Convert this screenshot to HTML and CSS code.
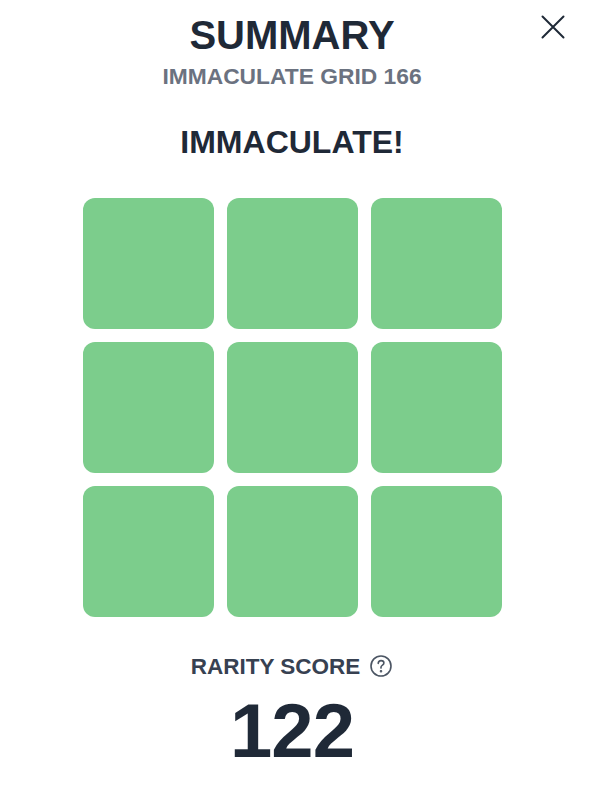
FILE: index.html
```html
<!DOCTYPE html>
<html lang="en">
<head>
<meta charset="utf-8">
<title>Summary</title>
<link rel="stylesheet" href="styles.css">
</head>
<body>
<main class="summary">
  <button class="close" aria-label="Close">
    <svg width="24" height="24" viewBox="0 0 24 24" fill="none" stroke="#1f2937" stroke-width="2" stroke-linecap="round">
      <path d="M1.5 1.5L22.5 22.5M22.5 1.5L1.5 22.5"/>
    </svg>
  </button>
  <h1 class="title">SUMMARY</h1>
  <p class="subtitle">IMMACULATE GRID 166</p>
  <h2 class="result">IMMACULATE!</h2>
  <div class="grid">
    <div class="cell"></div><div class="cell"></div><div class="cell"></div>
    <div class="cell"></div><div class="cell"></div><div class="cell"></div>
    <div class="cell"></div><div class="cell"></div><div class="cell"></div>
  </div>
  <div class="rarity">
    <span class="rarity-label">RARITY SCORE</span>
    <svg class="help" width="24" height="24" viewBox="0 0 24 24" fill="none" stroke="#4b5563" stroke-width="1.6" stroke-linecap="round" stroke-linejoin="round">
      <circle cx="12" cy="12" r="10"/>
      <path d="M9.2 9.4c.1-1.7 1.3-2.8 2.9-2.8 1.6 0 2.8 1.1 2.8 2.5 0 1.2-.8 1.8-1.7 2.3-.8.5-1.2 1-1.2 1.9v.8"/>
      <circle cx="12" cy="17.3" r=".5" fill="#4b5563"/>
    </svg>
  </div>
  <div class="score">122</div>
</main>
</body>
</html>
```
FILE: styles.css
```css
* { box-sizing: border-box; }
html, body { margin: 0; padding: 0; background: #ffffff; }
body {
  font-family: "Liberation Sans", Arial, Helvetica, sans-serif;
  color: #1f2937;
}
.summary {
  position: relative;
  width: 584px;
  min-height: 800px;
  padding-top: 15px;
  display: flex;
  flex-direction: column;
  align-items: center;
}
.close {
  position: absolute;
  top: 15px;
  left: 541px;
  width: 24px;
  height: 24px;
  padding: 0;
  border: 0;
  background: none;
  display: flex;
}
.title {
  margin: 0;
  font-size: 40px;
  line-height: 40px;
  font-weight: 700;
  color: #1f2937;
}
.subtitle {
  margin: 10px 0 0;
  font-size: 22.8px;
  line-height: 23px;
  font-weight: 700;
  color: #6b7280;
}
.result {
  margin: 38px 0 0;
  font-size: 32px;
  line-height: 32px;
  font-weight: 700;
  color: #1f2937;
}
.grid {
  margin-top: 40px;
  display: grid;
  grid-template-columns: repeat(3, 131px);
  grid-auto-rows: 131px;
  gap: 13px;
}
.cell {
  background: #7ccd8c;
  border-radius: 12px;
}
.rarity {
  margin-top: 38px;
  display: flex;
  align-items: center;
  gap: 9px;
  height: 23px;
}
.rarity-label {
  font-size: 22.5px;
  line-height: 23px;
  font-weight: 700;
  color: #374151;
}
.help { display: block; margin-top: -1px; }
.score {
  margin-top: 15px;
  font-size: 76px;
  line-height: 76px;
  font-weight: 700;
  letter-spacing: -1px;
  color: #1f2937;
}
```
